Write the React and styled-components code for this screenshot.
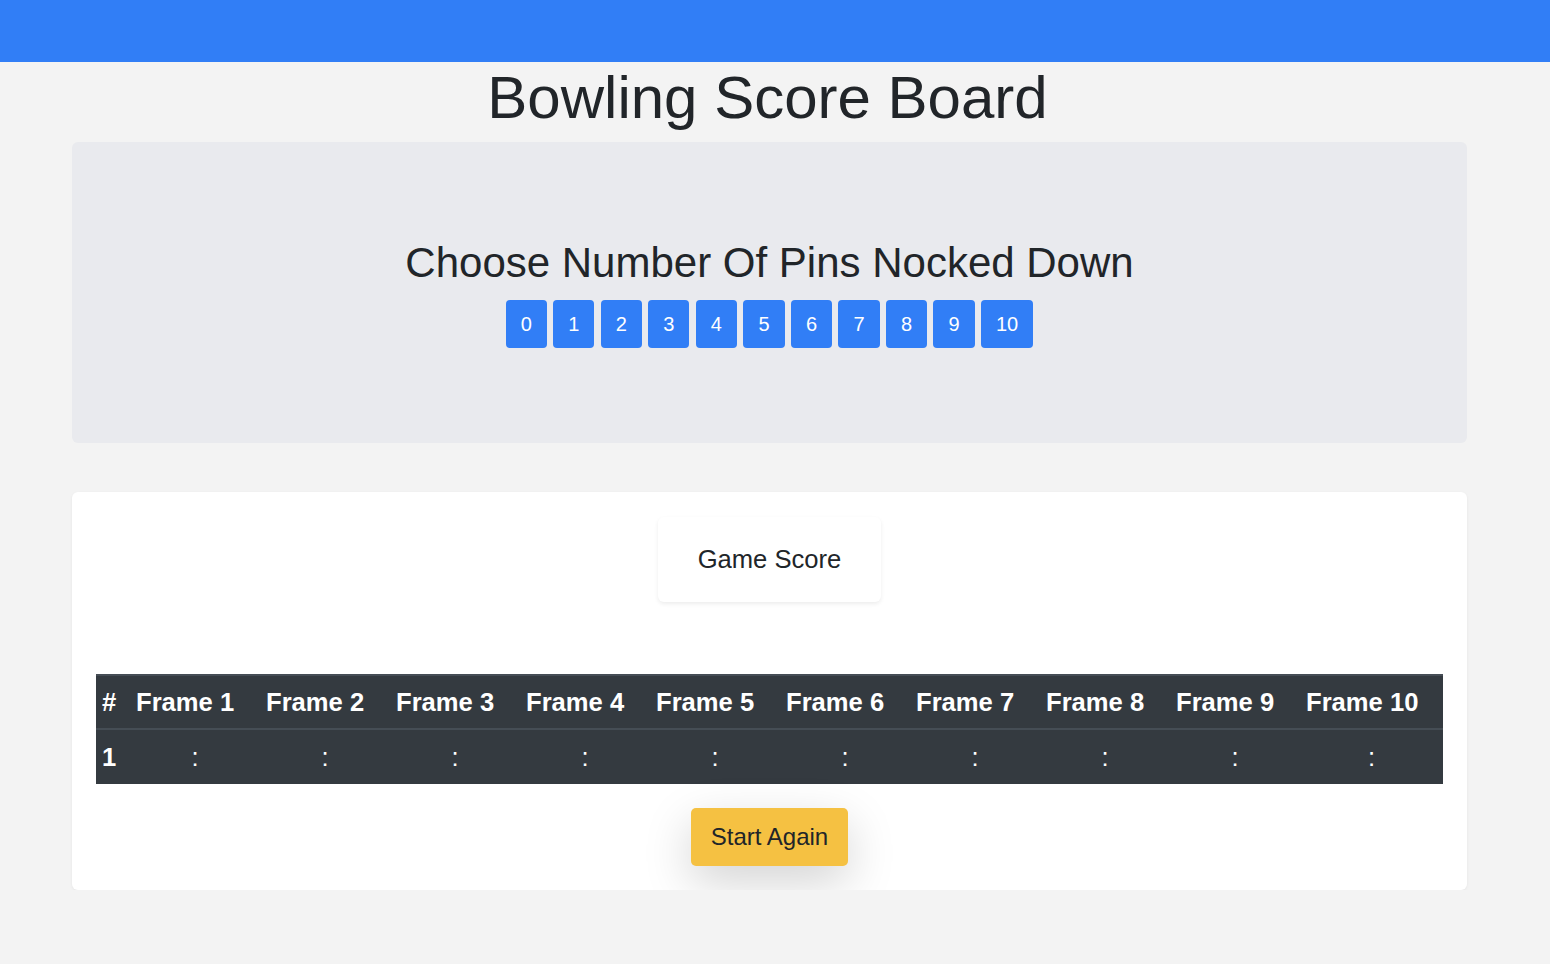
import React from 'react'
import styled, { createGlobalStyle } from 'styled-components'

const GlobalStyle = createGlobalStyle`
  body {
    margin: 0;
    background: #f3f3f3;
    font-family: "Liberation Sans", Arial, Helvetica, sans-serif;
    color: #212529;
  }
`

const TopBar = styled.div`
  height: 62px;
  background: #317ef6;
`

// page was laid out with a scrollbar, so the title centers on 1535px
const Title = styled.h1`
  width: 1535px;
  margin: 0;
  text-align: center;
  font-size: 60px;
  font-weight: 400;
  line-height: 1.2;
`

const Page = styled.div`
  width: 1395px;
  margin-left: 72px;
  padding-top: 8px;
`

const Jumbotron = styled.div`
  background: #e9eaee;
  border-radius: 6px;
  padding: 96px 0 95px;
  display: flex;
  flex-direction: column;
  align-items: center;
`

const PinsTitle = styled.h2`
  margin: 0 0 12px;
  font-size: 42px;
  font-weight: 400;
  line-height: 1.2;
`

const PinRow = styled.div`
  display: flex;
  gap: 6.4px;
`

const PinButton = styled.button`
  height: 48px;
  padding: 0 15px;
  border: none;
  border-radius: 4px;
  background: #317ef6;
  color: #fff;
  font-family: inherit;
  font-size: 20px;
  line-height: 1.5;
  cursor: pointer;
`

const Card = styled.div`
  margin-top: 49px;
  background: #fff;
  border-radius: 6px;
  box-shadow: 0 1px 3px rgba(0, 0, 0, 0.06);
  padding: 25px 24px 24px;
  display: flex;
  flex-direction: column;
  align-items: center;
`

const ScoreLabel = styled.div`
  padding: 27px 40px;
  font-size: 25.6px;
  line-height: 1.2;
  background: #fff;
  border-radius: 6px;
  box-shadow: 0 2px 4px rgba(0, 0, 0, 0.075);
`

const Table = styled.table`
  margin-top: 72px;
  width: 100%;
  table-layout: fixed;
  border-collapse: collapse;
  background: #343a40;
  color: #fff;
  font-size: 25.6px;
`

const HeadCell = styled.th`
  height: 52px;
  padding: 0 6px;
  text-align: left;
  font-weight: 700;
  border-top: 2px solid #454d55;
  border-bottom: 2px solid #454d55;
`

const Cell = styled.td`
  height: 54px;
  padding: 0 6px;
  text-align: ${(p) => (p.$first ? 'left' : 'center')};
  font-weight: ${(p) => (p.$first ? 700 : 400)};
`

const StartButton = styled.button`
  margin-top: 24px;
  padding: 11px 20px;
  border: none;
  border-radius: 5px;
  background: #f5c142;
  color: #212529;
  font-family: inherit;
  font-size: 24px;
  line-height: 1.5;
  box-shadow: 0 16px 48px rgba(0, 0, 0, 0.175);
  cursor: pointer;
`

const pins = [0, 1, 2, 3, 4, 5, 6, 7, 8, 9, 10]
const frames = [1, 2, 3, 4, 5, 6, 7, 8, 9, 10]

const App = () => {
  return (
    <>
      <GlobalStyle />
      <TopBar />
      <Title>Bowling Score Board</Title>
      <Page>
        <Jumbotron>
          <PinsTitle>Choose Number Of Pins Nocked Down</PinsTitle>
          <PinRow>
            {pins.map((p) => (
              <PinButton key={p}>{p}</PinButton>
            ))}
          </PinRow>
        </Jumbotron>
        <Card>
          <ScoreLabel>Game Score</ScoreLabel>
          <Table>
            <colgroup>
              <col style={{ width: 34 }} />
              {frames.map((f) => (
                <col key={f} style={{ width: f === 10 ? 143 : 130 }} />
              ))}
            </colgroup>
            <thead>
              <tr>
                <HeadCell>#</HeadCell>
                {frames.map((f) => (
                  <HeadCell key={f}>Frame {f}</HeadCell>
                ))}
              </tr>
            </thead>
            <tbody>
              <tr>
                <Cell $first>1</Cell>
                {frames.map((f) => (
                  <Cell key={f}>:</Cell>
                ))}
              </tr>
            </tbody>
          </Table>
          <StartButton>Start Again</StartButton>
        </Card>
      </Page>
    </>
  )
}

export default App
